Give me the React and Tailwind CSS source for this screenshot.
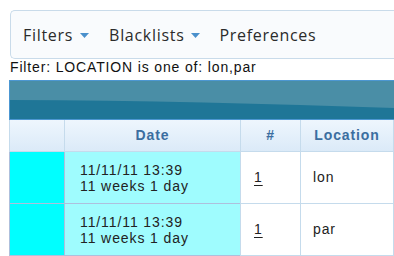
import React from "react";

const rows = [
  { date: "11/11/11 13:39", ago: "11 weeks 1 day", count: "1", location: "lon" },
  { date: "11/11/11 13:39", ago: "11 weeks 1 day", count: "1", location: "par" },
];

function Caret() {
  return (
    <svg width="9" height="5" viewBox="0 0 9 5" className="ml-[7px] mt-[2px]">
      <path d="M0 0 H9 L4.5 5 Z" fill="#4a90cc" />
    </svg>
  );
}

export default function App() {
  return (
    <div className="w-[394px] h-[256px] overflow-hidden bg-white [font-family:'Liberation_Sans',Arial,sans-serif] text-[#222]">
      {/* top nav */}
      <div className="ml-[10px] mt-[10px] h-[49px] rounded-l-[5px] border border-r-0 border-[#c9dbea] bg-[#f9fbfd] flex items-center pl-[12px] [font-family:'Open_Sans',sans-serif] text-[16px] tracking-[0.7px] text-[#2b2b2b]">
        <span className="flex items-center">
          Filters
          <Caret />
        </span>
        <span className="flex items-center ml-[20px]">
          Blacklists
          <Caret />
        </span>
        <span className="ml-[19px]">Preferences</span>
      </div>

      <p className="pl-[10px] text-[14px] leading-[17px] tracking-[0.85px] text-[#111]">
        Filter: LOCATION is one of: lon,par
      </p>

      {/* table */}
      <div className="ml-[9px] mt-[4px]">
        <div className="h-[40px] border border-r-0 border-[#4c97d2]">
          <svg viewBox="0 0 385 38" preserveAspectRatio="none" className="block w-full h-full">
            <rect width="385" height="38" fill="#1f7697" />
            <path d="M0 0 H385 V27 C260 23 130 19 0 19 Z" fill="#4a8ea6" />
          </svg>
        </div>

        <div className="grid grid-cols-[55px_176px_60px_94px]">
          {["", "Date", "#", "Location"].map((h, i) => (
            <div
              key={i}
              className={`h-[32px] border-b border-l border-[#c5dbec] bg-gradient-to-b from-[#eef6fd] to-[#dbeaf8] flex items-center justify-center text-[14px] font-bold tracking-[0.9px] text-[#3b6ea0] ${i === 3 ? "border-r" : ""}`}
            >
              {h}
            </div>
          ))}

          {rows.map((r, i) => (
            <React.Fragment key={i}>
              <div className="h-[52px] border-b border-l border-[#aebfdc] bg-[#00ffff]" />
              <div className="h-[52px] border-b border-l border-[#aebfdc] bg-[#9ffcfe] flex flex-col justify-center pl-[15px] text-[14px] leading-[16px] tracking-[0.9px]">
                <span>{r.date}</span>
                <span>{r.ago}</span>
              </div>
              <div className="h-[52px] border-b border-l border-[#c5dbec] bg-white flex items-center pl-[13px] text-[14px] tracking-[0.9px]">
                <span className="underline underline-offset-[3px]">{r.count}</span>
              </div>
              <div className="h-[52px] border-b border-l border-r border-[#c5dbec] bg-white flex items-center pl-[12px] text-[14px] tracking-[0.9px]">
                {r.location}
              </div>
            </React.Fragment>
          ))}
        </div>
      </div>
    </div>
  );
}
